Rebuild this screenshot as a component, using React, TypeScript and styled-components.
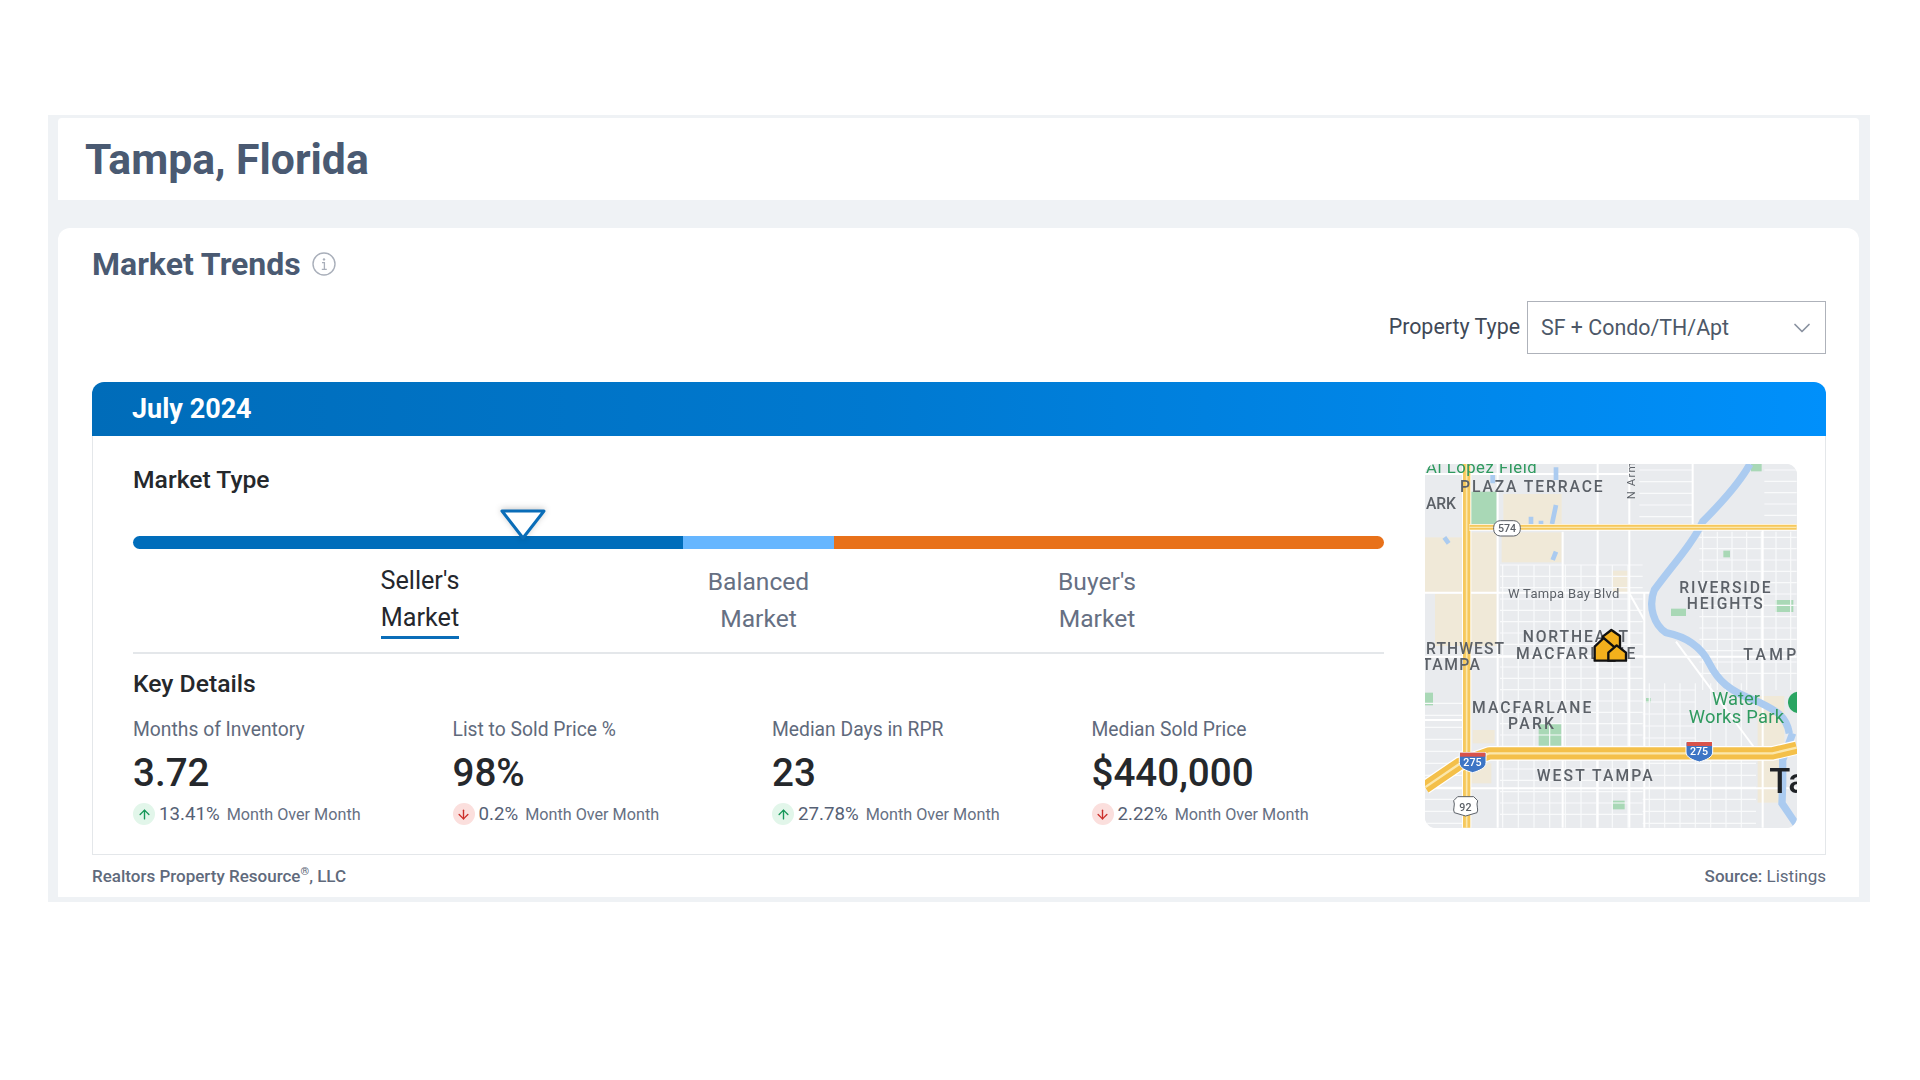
import React from "react";
import styled, { createGlobalStyle } from "styled-components";
import { ArrowDown, ArrowUp, ChevronDown } from "lucide-react";

const Global = createGlobalStyle`
  html, body { margin: 0; padding: 0; background: #fff; }
  body { font-family: Roboto, "Liberation Sans", sans-serif; }
  * { box-sizing: border-box; }
`;

const Page = styled.div`
  width: 1920px;
  height: 1080px;
  padding: 115px 50px 0 48px;
  overflow: hidden;
`;
const Shell = styled.div`
  height: 787px;
  background: #eff2f5;
  padding: 3px 11px 5px 10px;
  display: flex;
  flex-direction: column;
  gap: 28px;
`;
const TitleBar = styled.header`
  flex: 0 0 82px;
  background: #fff;
  border-radius: 4px 4px 0 0;
  display: flex;
  align-items: center;
  padding-left: 27px;
`;
const Title = styled.h1`
  margin: 0;
  font-size: 42.7px;
  font-weight: 700;
  color: #4a5a72;
`;
const Card = styled.section`
  flex: 1;
  min-height: 0;
  background: #fff;
  border-radius: 12px 12px 0 0;
  padding: 18px 33px 0 34px;
  display: flex;
  flex-direction: column;
`;
const HeadingRow = styled.div`
  display: flex;
  align-items: center;
  gap: 11px;
  height: 36px;
`;
const Heading = styled.h2`
  margin: 0;
  font-size: 32px;
  font-weight: 700;
  color: #4a5a72;
`;
const FilterRow = styled.div`
  display: flex;
  justify-content: flex-end;
  align-items: center;
  gap: 7px;
  margin-top: 19px;
`;
const FilterLabel = styled.span`
  font-size: 21.4px;
  color: #3f4957;
  position: relative;
  top: -1px;
`;
const Select = styled.div`
  width: 299px;
  height: 53px;
  border: 1.5px solid #aeb2ba;
  display: flex;
  align-items: center;
  justify-content: space-between;
  padding: 0 9px 0 13px;
  font-size: 21.4px;
  color: #4d5868;
  svg { color: #8a92a0; }
`;
const Banner = styled.div`
  margin-top: 28px;
  height: 54px;
  border-radius: 12px 12px 0 0;
  background: linear-gradient(90deg, #006cb9 0%, #0079d0 45%, #0090fb 100%);
  color: #fff;
  font-size: 27px;
  font-weight: 700;
  display: flex;
  align-items: center;
  padding-left: 40px;
`;
const Panel = styled.div`
  flex: 0 0 419px;
  border: 1.5px solid #e4e7ea;
  border-top: 0;
  padding: 29px 28px 0 40px;
  display: flex;
  justify-content: space-between;
  align-items: flex-start;
`;
const Left = styled.div`
  width: 1251px;
`;
const SubHeading = styled.h3`
  margin: 0;
  font-size: 24.7px;
  line-height: 30px;
  font-weight: 500;
  color: #25282c;
`;
const Track = styled.div`
  position: relative;
  margin-top: 41px;
  height: 13px;
  display: flex;
`;
const Segment = styled.div<{ $w: number; $c: string; $round?: string }>`
  width: ${(p) => p.$w}px;
  background: ${(p) => p.$c};
  border-radius: ${(p) => p.$round || "0"};
`;
const Marker = styled.svg`
  position: absolute;
  left: 367px;
  top: -27px;
  filter: drop-shadow(0 -1px 3px rgba(0, 0, 0, 0.22));
`;
const MarketRow = styled.div`
  display: grid;
  grid-template-columns: repeat(3, 338.5px);
  justify-content: center;
  margin-top: 13px;
  padding-bottom: 13px;
  border-bottom: 2px solid #e4e7ea;
`;
const MarketCell = styled.div<{ $active?: boolean }>`
  justify-self: center;
  text-align: center;
  font-size: ${(p) => (p.$active ? "25.2px" : "24.6px")};
  line-height: 37px;
  color: ${(p) => (p.$active ? "#24272d" : "#667083")};
  padding-top: ${(p) => (p.$active ? "0" : "1px")};
`;
const ActiveWord = styled.span`
  display: inline-block;
  border-bottom: 3px solid #0a6db8;
  line-height: 35px;
  padding-bottom: 1px;
`;
const KeyHead = styled(SubHeading)`
  margin-top: 15px;
`;
const StatGrid = styled.div`
  display: grid;
  grid-template-columns: repeat(4, 319.5px);
  margin-top: 16px;
`;
const Stat = styled.div`
  display: flex;
  flex-direction: column;
`;
const StatLabel = styled.div`
  font-size: 19.3px;
  line-height: 30px;
  color: #5f6a7c;
`;
const StatValue = styled.div`
  font-size: 38.6px;
  line-height: 46px;
  font-weight: 500;
  color: #25282c;
  margin-top: 5px;
`;
const Change = styled.div`
  display: flex;
  align-items: center;
  margin-top: 7px;
  height: 22px;
`;
const Badge = styled.span<{ $up: boolean }>`
  width: 22px;
  height: 22px;
  border-radius: 50%;
  display: flex;
  align-items: center;
  justify-content: center;
  background: ${(p) => (p.$up ? "#e2f6ea" : "#fbdfdd")};
  color: ${(p) => (p.$up ? "#17985a" : "#cc2f2a")};
`;
const Pct = styled.span`
  font-size: 18.7px;
  color: #566175;
  margin-left: 4px;
`;
const Period = styled.span`
  font-size: 16.2px;
  color: #667083;
  margin-left: 7px;
`;
const MapFrame = styled.div`
  width: 372px;
  height: 364px;
  border-radius: 11px;
  overflow: hidden;
  background: #e9ebee;
  margin-top: -1px;
`;
const MapSvg = styled.svg`
  display: block;
  width: 100%;
  height: 100%;
  filter: blur(0.45px);
`;
const MapLabel = styled.text<{ $size?: number; $c?: string; $w?: number }>`
  font-family: Roboto, "Liberation Sans", sans-serif;
  font-size: ${(p) => p.$size || 47}px;
  font-weight: ${(p) => p.$w || 500};
  fill: ${(p) => p.$c || "#5c6168"};
`;
const Footer = styled.footer`
  display: flex;
  justify-content: space-between;
  align-items: center;
  height: 42px;
  font-size: 17px;
  font-weight: 500;
  color: #5f6a7c;
  sup { font-size: 11px; line-height: 0; }
`;
const Regular = styled.span`
  font-weight: 400;
`;

const stats = [
  { label: "Months of Inventory", value: "3.72", pct: "13.41%", up: true },
  { label: "List to Sold Price %", value: "98%", pct: "0.2%", up: false },
  { label: "Median Days in RPR", value: "23", pct: "27.78%", up: true },
  { label: "Median Sold Price", value: "$440,000", pct: "2.22%", up: false },
];

const steps = (from: number, to: number, by: number) => {
  const out: number[] = [];
  for (let v = from; v <= to; v += by) out.push(v);
  return out;
};

const sand = [
  [47, 262, 115, 165], [77, 432, 85, 156], [182, 247, 80, 180], [182, 432, 80, 156], [277, 247, 180, 90],
  [282, 132, 175, 90], [610, 362, 48, 68], [1045, 738, 80, 150], [1045, 930, 72, 128], [190, 840, 66, 40], [186, 940, 60, 60],
];
const parks = [
  [184, 125, 78, 97], [388, 820, 68, 70], [942, 302, 20, 20], [785, 476, 45, 22],
  [1098, 450, 54, 36], [47, 728, 24, 38], [710, 744, 14, 14], [608, 1052, 38, 26], [1025, 42, 32, 22],
];
const labels: [string, number, number, number][] = [
  ["PLAZA TERRACE", 152, 125, 428], ["ARK", 50, 176, 90], ["RIVERSIDE", 810, 430, 274], ["HEIGHTS", 832, 478, 228],
  ["NORTHEAST", 340, 576, 316], ["MACFARLANE", 320, 626, 358], ["RTHWEST", 50, 611, 234], ["TAMPA", 38, 660, 174],
  ["TAMPA", 1002, 630, 196], ["MACFARLANE", 188, 789, 358], ["PARK", 296, 837, 138], ["WEST TAMPA", 382, 994, 348],
];

const TampaMap = () => (
  <MapSvg viewBox="47 42 1116 1092" preserveAspectRatio="none">
    <rect x="47" y="42" width="1116" height="1092" fill="#e9ebee" />
    {sand.map(([x, y, w, h], i) => <rect key={i} x={x} y={y} width={w} height={h} fill="#f0e9d8" />)}
    {parks.map(([x, y, w, h], i) => <rect key={i} x={x} y={y} width={w} height={h} fill="#a9d8b6" />)}
    <g stroke="#f9fafb" strokeWidth="3.5">
      {steps(345, 1120, 34).map((y) => <line key={y} x1="272" x2="700" y1={y} y2={y} />)}
      {steps(280, 700, 47).map((x) => <line key={x} x1={x} x2={x} y1="345" y2="1133" />)}
      {steps(262, 700, 34).map((y) => <line key={y} x1="870" x2="1162" y1={y} y2={y} />)}
      {steps(880, 1162, 44).map((x) => <line key={x} x1={x} x2={x} y1="245" y2="720" />)}
      {steps(760, 1120, 36).map((y) => <line key={y} x1="47" x2="160" y1={y} y2={y} />)}
      {steps(940, 1120, 36).map((y) => <line key={y} x1="700" x2="1040" y1={y} y2={y} />)}
      {steps(720, 880, 36).map((y) => <line key={y} x1="700" x2="860" y1={y} y2={y} />)}
      {steps(720, 1040, 46).map((x) => <line key={x} x1={x} x2={x} y1="700" y2="1133" />)}
      {steps(60, 200, 35).map((y) => <line key={y} x1="690" x2="850" y1={y} y2={y} />)}
      {steps(60, 220, 34).map((y) => <line key={y} x1="1065" x2="1162" y1={y} y2={y} />)}
    </g>
    <g stroke="#ffffff" strokeWidth="6" fill="none">
      <path d="M47 428H720M47 620H1162M47 72H660M265 42V1133M460 245V1133M565 42V1133M660 42V1133M705 430V1133M850 42V230M1060 240V1133M47 810H160M47 1015H1162" />
      <path d="M660 430L705 510M800 575L1040 900" />
    </g>
    <path d="M1022 42C990 100 930 165 880 215C850 280 790 345 735 420C715 470 735 525 770 548C830 560 875 590 900 640C925 690 960 725 1040 752C1085 775 1130 790 1140 850" stroke="#abcbf0" strokeWidth="22" fill="none" />
    <path d="M1150 850L1120 930V1000L1118 1060L1162 1125" stroke="#abcbf0" strokeWidth="22" fill="none" />
    <path d="M440 52V90M250 75V100M440 165L428 222M365 200V222M395 212V222M440 305L430 330M105 262L118 280" stroke="#abcbf0" strokeWidth="14" fill="none" />
    <g fill="none" strokeLinejoin="round">
      <path d="M172 42V1133" stroke="#fff" strokeWidth="28" />
      <path d="M172 42V1133" stroke="#f6c85c" strokeWidth="22" />
      <path d="M172 42V1133" stroke="#fbe7ac" strokeWidth="5" />
      <path d="M180 232H1162" stroke="#fff" strokeWidth="20" />
      <path d="M180 232H1162" stroke="#f6c85c" strokeWidth="15" />
      <path d="M180 232H1162" stroke="#fbe7ac" strokeWidth="4" />
      <path d="M47 1012L150 942L240 910H1090L1162 893" stroke="#fff" strokeWidth="44" />
      <path d="M47 1012L150 942L240 910H1090L1162 893" stroke="#f4c04a" strokeWidth="37" />
      <path d="M47 1012L150 942L240 910H1090L1162 893" stroke="#fbe7ac" strokeWidth="7" />
    </g>
    <circle cx="1168" cy="757" r="32" fill="#2aa562" />
    <MapLabel x="50" y="70" $size={50} $c="#2f9a5f" textLength="332" lengthAdjust="spacing" $w={400}>Al Lopez Field</MapLabel>
    <MapLabel transform="translate(677 148) rotate(-90)" $size={34} $w={400} textLength="110" lengthAdjust="spacing">N Arm</MapLabel>
    <MapLabel x="296" y="444" $size={39} $w={400} textLength="334" lengthAdjust="spacing">W Tampa Bay Blvd</MapLabel>
    {labels.map(([t, x, y, l]) => <MapLabel key={t + x} x={x} y={y} textLength={l} lengthAdjust="spacing">{t}</MapLabel>)}
    <MapLabel x="908" y="764" $size={55} $c="#2f9a5f" textLength="144" lengthAdjust="spacing" $w={400}>Water</MapLabel>
    <MapLabel x="838" y="820" $size={55} $c="#2f9a5f" textLength="286" lengthAdjust="spacing" $w={400}>Works Park</MapLabel>
    <MapLabel x="1080" y="1030" $size={104} $c="#1f2226" $w={500}>Ta</MapLabel>
    <rect x="253" y="212" width="80" height="46" rx="20" fill="#fff" stroke="#5c6168" strokeWidth="3" />
    <MapLabel x="266" y="247" $size={32} $w={500}>574</MapLabel>
    {[[150, 908], [830, 876]].map(([x, y]) => (
      <g key={x}>
        <path d={`M${x} ${y}h80v30c0 16-20 24-40 30c-20-6-40-14-40-30z`} fill="#3d75c5" stroke="#fff" strokeWidth="3" />
        <path d={`M${x + 2} ${y}h76v12h-76z`} fill="#d8524a" />
        <MapLabel x={x + 12} y={y + 40} $size={32} $c="#fff">275</MapLabel>
      </g>
    ))}
    <path d="M145 1040h48l12 12c-6 14 4 26-2 36l-34 10l-34-10c-6-10 4-22-2-36z" fill="#fff" stroke="#5c6168" strokeWidth="3" />
    <MapLabel x="150" y="1082" $size={32}>92</MapLabel>
    <g stroke="#111" strokeWidth="7" strokeLinejoin="round" fill="#f3b01c">
      <path d="M580 560L606 540L632 558V600H580Z" />
      <path d="M556 632V590L583 564L616 592V632Z" />
      <path d="M597 632V608L622 586L650 608V632Z" />
    </g>
  </MapSvg>
);

export default function App() {
  return (
    <Page>
      <Global />
      <Shell>
        <TitleBar>
          <Title>Tampa, Florida</Title>
        </TitleBar>
        <Card>
          <HeadingRow>
            <Heading>Market Trends</Heading>
            <svg width="24" height="24" viewBox="0 0 24 24" fill="none">
              <circle cx="12" cy="12" r="11" stroke="#a9afba" strokeWidth="1.4" />
              <circle cx="12" cy="7.4" r="1.2" fill="#a9afba" />
              <path d="M10 10.6h2.4v6.6M9.8 17.4h5" stroke="#a9afba" strokeWidth="1.3" />
            </svg>
          </HeadingRow>
          <FilterRow>
            <FilterLabel>Property Type</FilterLabel>
            <Select>
              SF + Condo/TH/Apt
              <ChevronDown size={28} strokeWidth={1.5} />
            </Select>
          </FilterRow>
          <Banner>July 2024</Banner>
          <Panel>
            <Left>
              <SubHeading>Market Type</SubHeading>
              <Track>
                <Segment $w={550} $c="#006dbb" $round="7px 0 0 7px" />
                <Segment $w={151} $c="#66b6ff" />
                <Segment $w={550} $c="#e8711a" $round="0 7px 7px 0" />
                <Marker width="46" height="31" viewBox="0 0 46 31">
                  <path d="M2 2H44L23 29Z" fill="#fff" stroke="#0a6db8" strokeWidth="3" strokeLinejoin="round" />
                </Marker>
              </Track>
              <MarketRow>
                <MarketCell $active>Seller's<br /><ActiveWord>Market</ActiveWord></MarketCell>
                <MarketCell>Balanced<br />Market</MarketCell>
                <MarketCell>Buyer's<br />Market</MarketCell>
              </MarketRow>
              <KeyHead>Key Details</KeyHead>
              <StatGrid>
                {stats.map((s) => (
                  <Stat key={s.label}>
                    <StatLabel>{s.label}</StatLabel>
                    <StatValue>{s.value}</StatValue>
                    <Change>
                      <Badge $up={s.up}>
                        {s.up ? <ArrowUp size={15} strokeWidth={2.2} /> : <ArrowDown size={15} strokeWidth={2.2} />}
                      </Badge>
                      <Pct>{s.pct}</Pct>
                      <Period>Month Over Month</Period>
                    </Change>
                  </Stat>
                ))}
              </StatGrid>
            </Left>
            <MapFrame>
              <TampaMap />
            </MapFrame>
          </Panel>
          <Footer>
            <span>Realtors Property Resource<sup>®</sup>, LLC</span>
            <span>Source: <Regular>Listings</Regular></span>
          </Footer>
        </Card>
      </Shell>
    </Page>
  );
}
